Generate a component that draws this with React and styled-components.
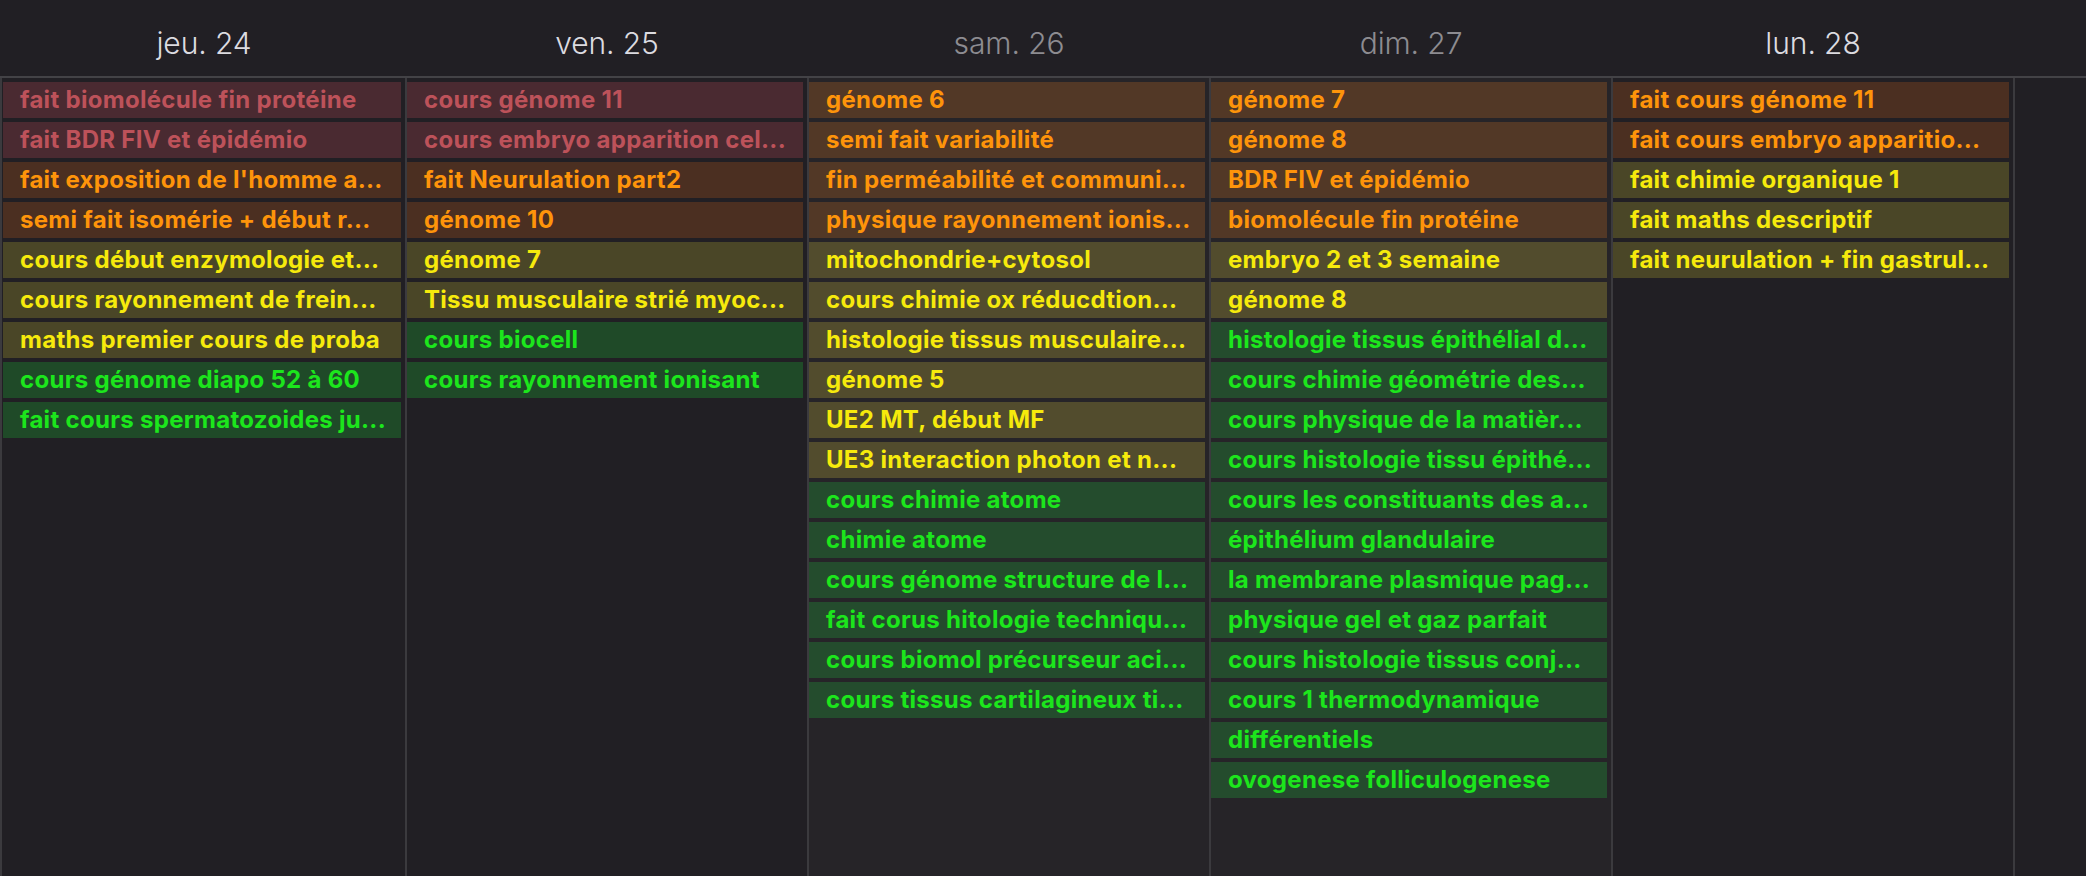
import React from "react";
import styled, { createGlobalStyle } from "styled-components";

const GlobalStyle = createGlobalStyle`
  *, *::before, *::after { box-sizing: border-box; }
  html, body { margin: 0; padding: 0; background: #211f24; }
  body { font-family: Inter, "Noto Sans", "Liberation Sans", sans-serif; }
`;

const COLS = "405px repeat(4, 402px) 1fr";

const Page = styled.div`
  width: 2086px;
  height: 876px;
  display: flex;
  flex-direction: column;
  background: #211f24;
  overflow: hidden;
`;

const Header = styled.div`
  height: 78px;
  flex: none;
  display: grid;
  grid-template-columns: ${COLS};
  border-bottom: 2px solid #434246;
`;

const DayLabel = styled.div`
  display: flex;
  align-items: center;
  justify-content: center;
  padding-left: ${(p) => (p.$first ? "3px" : "2px")};
  padding-top: 10px;
  font-size: 30px;
  font-weight: 300;
  color: ${(p) => (p.$weekend ? "#8d8c91" : "#dcdbe0")};
  letter-spacing: -0.1px;
`;

const Body = styled.div`
  flex: 1;
  display: grid;
  grid-template-columns: ${COLS};
`;

const Column = styled.div`
  border-left: 2px solid #3b3a3e;
  background: ${(p) => (p.$weekend ? "#262428" : "#211f24")};
  padding: 4px 4px 0 ${(p) => (p.$first ? "1px" : "0")};
  display: flex;
  flex-direction: column;
  gap: 4px;
  min-width: 0;
`;

const PALETTE = {
  red: { bg: "#4a2a31", fg: "#bd525a" },
  orange: { bg: "#4b2f21", fg: "#fe940a" },
  yellow: { bg: "#4a4627", fg: "#f6ea0c" },
  green: { bg: "#1f4a28", fg: "#1ce61c" },
};
const WEEKEND = {
  red: { bg: "#4d2d34", fg: "#bd525a" },
  orange: { bg: "#523826", fg: "#fe940a" },
  yellow: { bg: "#524c2d", fg: "#f6ea0c" },
  green: { bg: "#244c2d", fg: "#1ce61c" },
};

const Event = styled.div`
  height: 36px;
  flex: none;
  display: flex;
  align-items: center;
  padding: 0 14px 1px 17px;
  background: ${(p) => (p.$weekend ? WEEKEND : PALETTE)[p.$tone].bg};
  color: ${(p) => (p.$weekend ? WEEKEND : PALETTE)[p.$tone].fg};
  font-size: 24px;
  font-weight: 700;
  letter-spacing: 0.3px;
  white-space: nowrap;
  overflow: hidden;
  text-overflow: ellipsis;
`;

const days = [
  {
    label: "jeu. 24",
    events: [
      ["red", "fait biomolécule fin protéine"],
      ["red", "fait BDR FIV et épidémio"],
      ["orange", "fait exposition de l'homme a..."],
      ["orange", "semi fait isomérie + début r..."],
      ["yellow", "cours début enzymologie et..."],
      ["yellow", "cours rayonnement de frein..."],
      ["yellow", "maths premier cours de proba"],
      ["green", "cours génome diapo 52 à 60"],
      ["green", "fait cours spermatozoides ju..."],
    ],
  },
  {
    label: "ven. 25",
    events: [
      ["red", "cours génome 11"],
      ["red", "cours embryo apparition cel..."],
      ["orange", "fait Neurulation part2"],
      ["orange", "génome 10"],
      ["yellow", "génome 7"],
      ["yellow", "Tissu musculaire strié myoc..."],
      ["green", "cours biocell"],
      ["green", "cours rayonnement ionisant"],
    ],
  },
  {
    label: "sam. 26",
    weekend: true,
    events: [
      ["orange", "génome 6"],
      ["orange", "semi fait variabilité"],
      ["orange", "fin perméabilité et communi..."],
      ["orange", "physique rayonnement ionis..."],
      ["yellow", "mitochondrie+cytosol"],
      ["yellow", "cours chimie ox réducdtion..."],
      ["yellow", "histologie tissus musculaire..."],
      ["yellow", "génome 5"],
      ["yellow", "UE2 MT, début MF"],
      ["yellow", "UE3 interaction photon et n..."],
      ["green", "cours chimie atome"],
      ["green", "chimie atome"],
      ["green", "cours génome structure de l..."],
      ["green", "fait corus hitologie techniqu..."],
      ["green", "cours biomol précurseur aci..."],
      ["green", "cours tissus cartilagineux ti..."],
    ],
  },
  {
    label: "dim. 27",
    weekend: true,
    events: [
      ["orange", "génome 7"],
      ["orange", "génome 8"],
      ["orange", "BDR FIV et épidémio"],
      ["orange", "biomolécule fin protéine"],
      ["yellow", "embryo 2 et 3 semaine"],
      ["yellow", "génome 8"],
      ["green", "histologie tissus épithélial d..."],
      ["green", "cours chimie géométrie des..."],
      ["green", "cours physique de la matièr..."],
      ["green", "cours histologie tissu épithé..."],
      ["green", "cours les constituants des a..."],
      ["green", "épithélium glandulaire"],
      ["green", "la membrane plasmique pag..."],
      ["green", "physique gel et gaz parfait"],
      ["green", "cours histologie tissus conj..."],
      ["green", "cours 1 thermodynamique"],
      ["green", "différentiels"],
      ["green", "ovogenese folliculogenese"],
    ],
  },
  {
    label: "lun. 28",
    events: [
      ["orange", "fait cours génome 11"],
      ["orange", "fait cours embryo apparitio..."],
      ["yellow", "fait chimie organique 1"],
      ["yellow", "fait maths descriptif"],
      ["yellow", "fait neurulation + fin gastrul..."],
    ],
  },
];

export default function App() {
  return (
    <Page>
      <GlobalStyle />
      <Header>
        {days.map((d, i) => (
          <DayLabel key={d.label} $weekend={d.weekend} $first={i === 0}>
            {d.label}
          </DayLabel>
        ))}
        <DayLabel />
      </Header>
      <Body>
        {days.map((d, i) => (
          <Column key={d.label} $weekend={d.weekend} $first={i === 0}>
            {d.events.map(([tone, text], j) => (
              <Event key={j} $tone={tone} $weekend={d.weekend}>
                {text}
              </Event>
            ))}
          </Column>
        ))}
        <Column />
      </Body>
    </Page>
  );
}
